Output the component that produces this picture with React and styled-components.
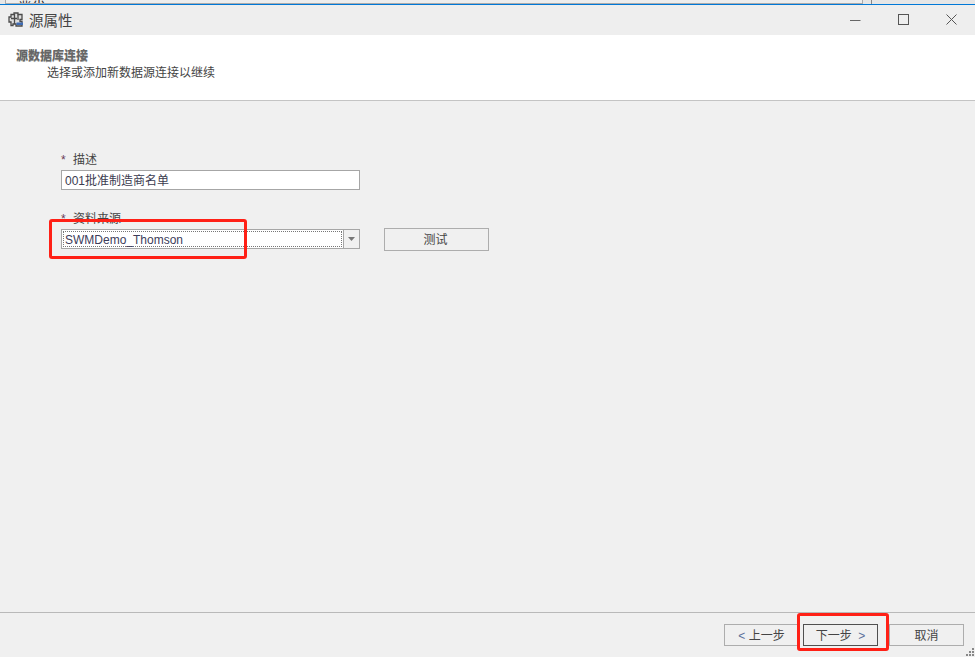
import React from "react";
import styled, { createGlobalStyle } from "styled-components";

const Global = createGlobalStyle`
  html, body { margin: 0; padding: 0; background: #f0f0f0; }
  body { font-family: "Liberation Sans", "Noto Sans CJK SC", sans-serif; }
  * { box-sizing: border-box; }
`;
const Win = styled.div`
  width: 975px; height: 657px; display: flex; flex-direction: column;
  background: #f0f0f0; overflow: hidden; position: relative; color: #333;
`;
const BehindStrip = styled.div`
  height: 4px; flex: none; background: #e6e6e6; display: flex; overflow: hidden; padding-left: 5px;
`;
const BehindPanel = styled.div`
  width: 858px; height: 4px; border-right: 1px solid #aaa; border-left: 1px solid #aaa;
  border-bottom: 1px solid #aaa; padding-left: 12px; overflow: hidden;
  font-size: 14px; line-height: 0px; color: #333; background: #ededed;
`;
const BehindDivider = styled.div`width: 1px; margin-left: 8px; background: #888;`;
const AccentLine = styled.div`height: 1px; flex: none; background: #0078d7;`;
const TitleBar = styled.div`
  height: 30px; flex: none; background: #eeeeee; display: flex; align-items: center; padding: 0 0 1px 8px;
`;
const TitleText = styled.span`font-size: 14.5px; margin-left: 4px; color: #444;`;
const WinButtons = styled.div`margin-left: auto; display: flex; align-items: center;`;
const WinBtn = styled.div`width: 48px; height: 30px; display: flex; align-items: center; justify-content: center;`;
const Header = styled.div`
  height: 66px; background: #fff; border-bottom: 1px solid #c4c4c4; padding: 14px 0 0 16px; flex: none;
`;
const HeaderTitle = styled.div`
  font-size: 12px; line-height: 14px; font-weight: 700; color: #666; text-shadow: 0 0.5px 0.6px #999;
`;
const HeaderSub = styled.div`font-size: 12px; line-height: 17px; margin: 2px 0 0 31px; color: #444;`;
const Body = styled.div`flex: 1; padding: 51px 0 0 61px; background: #f0f0f0;`;
const Label = styled.div`font-size: 12px; line-height: 17px; color: #444; display: flex; height: 17px;`;
const Star = styled.span`width: 12px; color: #6b3a55;`;
const TextInput = styled.div`
  width: 299px; height: 20px; border: 1px solid #a6a6a6; background: #fff;
  font-size: 12px; line-height: 20px; padding-left: 3px; color: #3c3c50; margin-top: 1px;
`;
const FieldGap = styled.div`height: 21px;`;
const SelectRow = styled.div`display: flex; align-items: flex-start; margin-top: -1px;`;
const Select = styled.div`
  width: 299px; height: 20px; border: 1px solid #a6a6a6; background: #fff; display: flex; margin-right: 24px; margin-top: 2px;
`;
const SelectValue = styled.div`
  flex: 1; margin: 1px; border: 1px dotted #777; font-size: 12px; line-height: 16px; padding-left: 1px; color: #3c3c5a;
`;
const Caret = styled.div`
  width: 16px; border-left: 1px solid #a6a6a6; background: #f0f0f0; display: flex; align-items: center; justify-content: center;
`;
const Button = styled.div`
  width: 75px; height: 22px; flex: none; border: 1px solid ${p => p.$focus ? "#505050" : "#adadad"};
  background: #f0f0f0; font-size: 12px; line-height: 22px; text-align: center; color: #444;
`;
const TestButton = styled(Button)`width: 105px; height: 23px; margin-top: 1px; padding-right: 2px;`;
const CancelButton = styled(Button)`margin-left: 7px;`;
const Footer = styled.div`
  height: 45px; flex: none; border-top: 1px solid #b9b9b9; display: flex; justify-content: flex-end;
  padding: 11px 11px 0 0; gap: 4px; position: relative;
`;
const Arrow = styled.span`color: #5a6f9a; margin-left: ${p => p.$gap || 0}px;`;
const Highlight = styled.div`
  position: absolute; left: ${p => p.$x}px; top: ${p => p.$y}px; width: ${p => p.$w}px; height: ${p => p.$h}px;
  border: 3px solid #ff2016; border-radius: 3px; pointer-events: none;
`;
const Grip = styled.svg`position: absolute; right: 0; bottom: 0;`;

export default function App() {
  return (
    <Win>
      <Global />
      <BehindStrip>
        <BehindPanel>显示</BehindPanel>
        <BehindDivider />
      </BehindStrip>
      <AccentLine />
      <TitleBar>
        <svg width="17" height="17" viewBox="0 0 17 17">
          <path d="M3 3.5h3V2h4v1.5h4v5h-2v2h2V15H8v-2H5v1.500H3V11H1V6h2z" fill="#dedede" stroke="#4a4a4a" strokeWidth="1.3" />
          <path d="M6.500 3v10M10 3.500v5.500M3 7.500h6" stroke="#4a4a4a" strokeWidth="1.3" fill="none" />
          <path d="M8.500 11.500h6.500v2.500H8.500z" fill="#3f6cb5" />
        </svg>
        <TitleText>源属性</TitleText>
        <WinButtons>
          <WinBtn>
            <svg width="11" height="11" viewBox="0 0 11 11"><path d="M0 6.500h10.500" stroke="#666" strokeWidth="1" /></svg>
          </WinBtn>
          <WinBtn>
            <svg width="11" height="11" viewBox="0 0 11 11"><rect x="0.5" y="0.500" width="10" height="10" fill="none" stroke="#555" /></svg>
          </WinBtn>
          <WinBtn>
            <svg width="11" height="11" viewBox="0 0 11 11"><path d="M0.500 0.500l10 10M10.500 0.500l-10 10" stroke="#555" /></svg>
          </WinBtn>
        </WinButtons>
      </TitleBar>
      <Header>
        <HeaderTitle>源数据库连接</HeaderTitle>
        <HeaderSub>选择或添加新数据源连接以继续</HeaderSub>
      </Header>
      <Body>
        <Label><Star>*</Star>描述</Label>
        <TextInput>001批准制造商名单</TextInput>
        <FieldGap />
        <Label><Star>*</Star>资料来源</Label>
        <SelectRow>
          <Select>
            <SelectValue>SWMDemo_Thomson</SelectValue>
            <Caret>
              <svg width="7" height="4" viewBox="0 0 7 4"><path d="M0 0h7L3.500 4z" fill="#777" /></svg>
            </Caret>
          </Select>
          <TestButton>测试</TestButton>
        </SelectRow>
      </Body>
      <Footer>
        <Button><Arrow>&lt;</Arrow> 上一步</Button>
        <Button $focus>下一步 <Arrow $gap={3}>&gt;</Arrow></Button>
        <CancelButton>取消</CancelButton>
        <Grip width="11" height="11" viewBox="0 0 11 11">
          <path d="M8 2h2v2H8zM5 5h2v2H5zM8 5h2v2H8zM2 8h2v2H2zM5 8h2v2H5zM8 8h2v2H8z" fill="#888" />
        </Grip>
      </Footer>
      <Highlight $x={49} $y={219} $w={198} $h={40} />
      <Highlight $x={797} $y={613} $w={92} $h={38} />
    </Win>
  );
}
